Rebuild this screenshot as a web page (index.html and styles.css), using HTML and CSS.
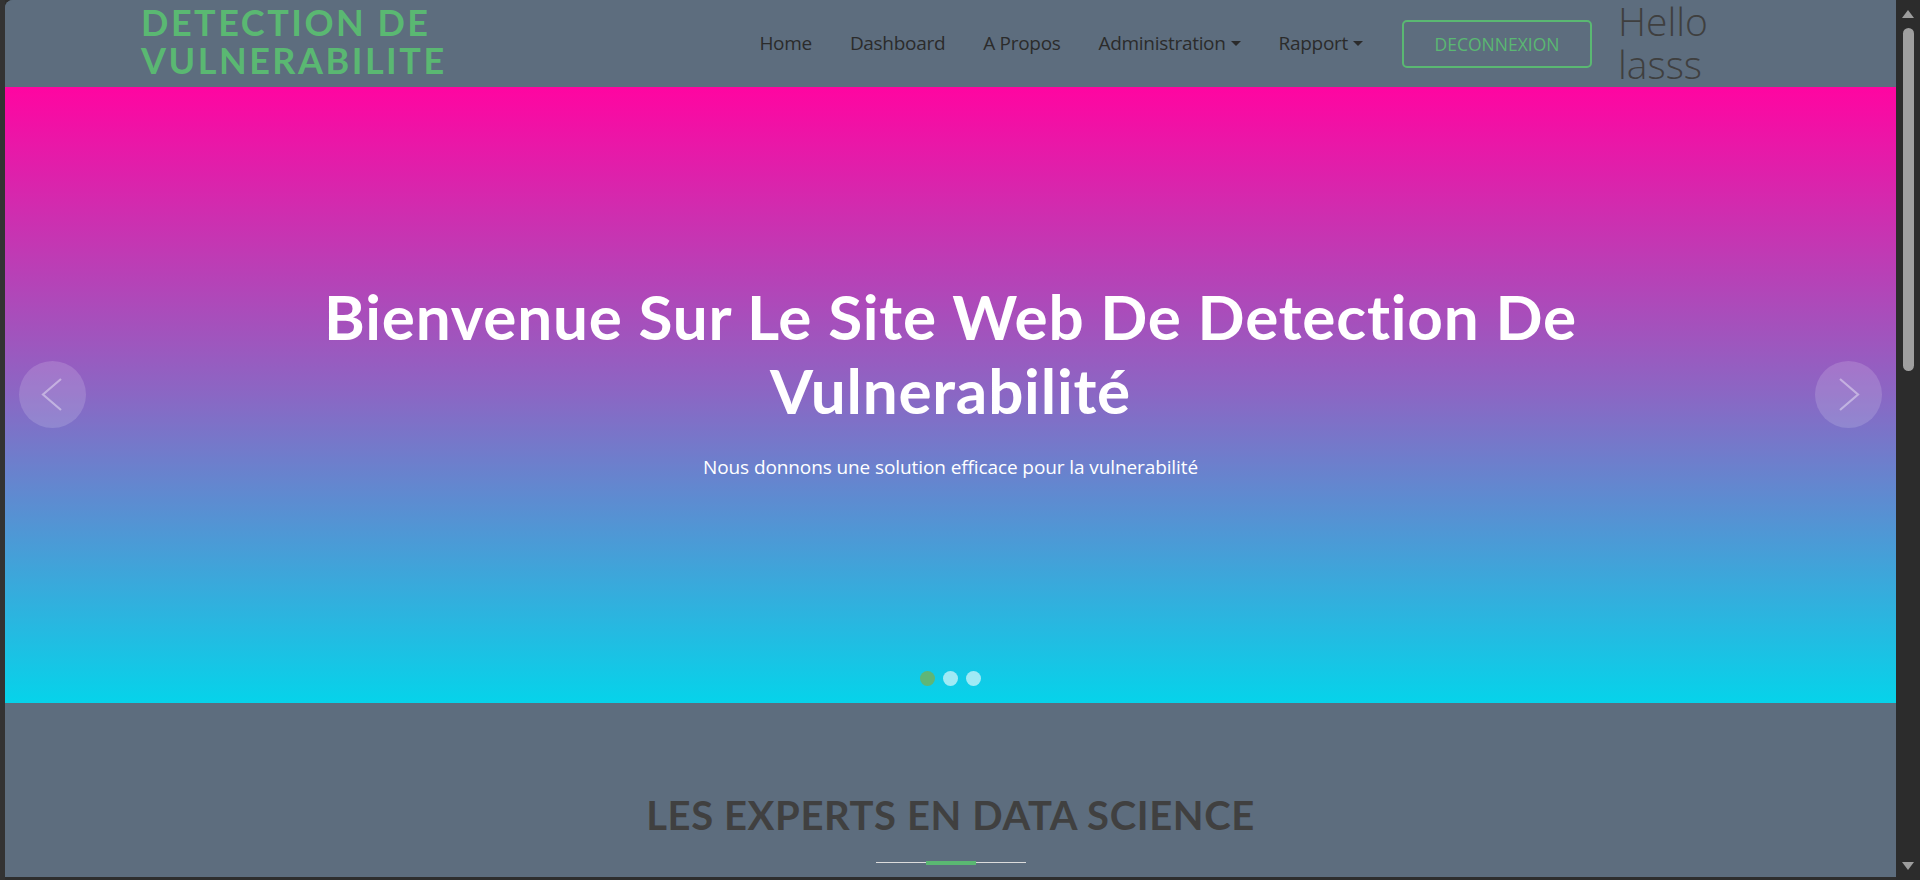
FILE: index.html
```html
<!DOCTYPE html>
<html lang="fr">
<head>
<meta charset="utf-8">
<title>Detection de vulnerabilite</title>
<link rel="stylesheet" href="styles.css">
</head>
<body>
<div class="window">
  <div class="gutter"></div>
  <div class="page">
    <header class="navbar">
      <a class="brand" href="#"><span>DETECTION DE</span><span>VULNERABILITE</span></a>
      <div class="right">
        <ul class="nav">
          <li><a href="#">Home</a></li>
          <li><a href="#">Dashboard</a></li>
          <li><a href="#">A Propos</a></li>
          <li><a href="#" class="dropdown">Administration</a></li>
          <li><a href="#" class="dropdown">Rapport</a></li>
        </ul>
        <a class="btn-logout" href="#">DECONNEXION</a>
        <div class="hello"><span>Hello</span><span>lasss</span></div>
      </div>
    </header>
    <section class="hero">
      <div class="hero-text">
        <h1>Bienvenue Sur Le Site Web De Detection De<br>Vulnerabilité</h1>
        <p>Nous donnons une solution efficace pour la vulnerabilité</p>
      </div>
      <a class="arrow arrow-left" href="#"><svg width="67" height="67" viewBox="0 0 67 67"><polyline points="42,18 24,33.5 42,49" fill="none" stroke="rgba(255,255,255,0.4)" stroke-width="2.2"/></svg></a>
      <a class="arrow arrow-right" href="#"><svg width="67" height="67" viewBox="0 0 67 67"><polyline points="25,18 43,33.5 25,49" fill="none" stroke="rgba(255,255,255,0.4)" stroke-width="2.2"/></svg></a>
      <ol class="dots">
        <li class="active"></li>
        <li></li>
        <li></li>
      </ol>
    </section>
    <section class="experts">
      <h2>LES EXPERTS EN DATA SCIENCE</h2>
      <div class="underline"><span></span></div>
    </section>
  </div>
  <div class="scrollbar">
    <div class="sb-up"></div>
    <div class="sb-thumb"></div>
    <div class="sb-space"></div>
    <div class="sb-down"></div>
  </div>
</div>
</body>
</html>
```

FILE: styles.css
```css
* { box-sizing: border-box; }
html, body { margin: 0; padding: 0; }
body {
  background: #2e2e2e;
  font-family: "Open Sans", "Noto Sans", sans-serif;
  overflow: hidden;
  font-variant-ligatures: none;
}
.window {
  display: flex;
  height: 880px;
  width: 1920px;
}
.gutter {
  width: 5px;
  background: #333333;
}
.page {
  flex: 1;
  height: 877px;
  background: #5d6d7e;
  border-top-left-radius: 8px;
  overflow: hidden;
}

/* navbar */
.navbar {
  height: 87px;
  display: flex;
  align-items: center;
  justify-content: space-between;
  padding: 0 188px 0 136px;
  background: #5d6d7e;
}
.brand {
  display: flex;
  flex-direction: column;
  font-family: "Lato", sans-serif;
  font-weight: 700;
  font-size: 36px;
  line-height: 38px;
  letter-spacing: 2.5px;
  color: #5ab872;
  text-decoration: none;
  margin-top: -5px;
}
.right {
  display: flex;
  align-items: center;
}
.nav {
  list-style: none;
  margin: -2px 0 0;
  padding: 0;
  display: flex;
  gap: 38px;
}
.nav a {
  color: #2b2b2b;
  text-decoration: none;
  font-size: 19px;
  letter-spacing: -0.3px;
}
.dropdown::after {
  content: "";
  display: inline-block;
  margin-left: 5px;
  vertical-align: 4px;
  border-top: 5px solid #2b2b2b;
  border-left: 5px solid transparent;
  border-right: 5px solid transparent;
}
.btn-logout {
  margin-left: 39px;
  width: 190px;
  height: 48px;
  display: flex;
  align-items: center;
  justify-content: center;
  border: 2px solid #5ab872;
  border-radius: 5px;
  color: #5ab872;
  font-size: 17.5px;
  text-decoration: none;
}
.hello {
  display: flex;
  flex-direction: column;
  margin-left: 26px;
  font-size: 39px;
  font-weight: 300;
  line-height: 43px;
  color: #3f3f3f;
  margin-top: -4px;
}

/* hero */
.hero {
  position: relative;
  height: 616px;
  background: linear-gradient(to bottom, #ff05a1 0%, #8a67c4 50%, #06d3ea 100%);
  padding-top: 192px;
  text-align: center;
  color: #fff;
}
.hero h1 {
  margin: 0;
  font-family: "Lato", sans-serif;
  font-weight: 700;
  font-size: 62px;
  line-height: 74px;
  letter-spacing: 0.8px;
}
.hero p {
  margin: 27px 0 0;
  font-size: 19px;
  line-height: 26px;
  letter-spacing: -0.1px;
}
.arrow {
  position: absolute;
  top: 50%;
  margin-top: -34px;
  width: 67px;
  height: 67px;
  border-radius: 50%;
  background: rgba(255, 255, 255, 0.15);
  display: block;
}
.arrow svg { display: block; }
.arrow-left { left: 14px; }
.arrow-right { right: 14px; }
.dots {
  position: absolute;
  left: 0;
  right: 0;
  bottom: 17px;
  margin: 0;
  padding: 0;
  list-style: none;
  display: flex;
  justify-content: center;
  gap: 8px;
}
.dots li {
  width: 15px;
  height: 15px;
  border-radius: 50%;
  background: rgba(255, 255, 255, 0.6);
}
.dots li.active { background: #5fb677; }

/* experts */
.experts {
  padding-top: 88px;
  text-align: center;
}
.experts h2 {
  margin: 0;
  font-family: "Lato", sans-serif;
  font-weight: 700;
  font-size: 40px;
  line-height: 48px;
  color: #404040;
  letter-spacing: 0.6px;
}
.underline {
  width: 150px;
  height: 1px;
  background: #dcdcdc;
  margin: 23px auto 0;
  display: flex;
  justify-content: center;
  align-items: center;
}
.underline span {
  width: 50px;
  height: 4px;
  background: #5ab872;
}

/* scrollbar */
.scrollbar {
  width: 24px;
  background: #2c2c2c;
  display: flex;
  flex-direction: column;
  align-items: center;
  padding: 10px 0 10px;
}
.sb-up {
  width: 0;
  height: 0;
  border-bottom: 8px solid #9d9d9d;
  border-left: 6px solid transparent;
  border-right: 6px solid transparent;
}
.sb-thumb {
  margin-top: 10px;
  width: 11px;
  height: 343px;
  border-radius: 6px;
  background: #9f9f9f;
}
.sb-space { flex: 1; }
.sb-down {
  width: 0;
  height: 0;
  border-top: 8px solid #9d9d9d;
  border-left: 6px solid transparent;
  border-right: 6px solid transparent;
}
```
